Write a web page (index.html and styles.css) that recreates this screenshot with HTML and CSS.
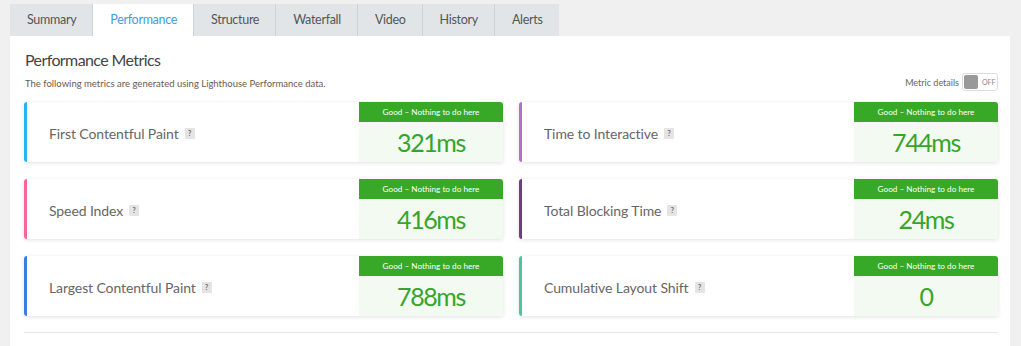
FILE: index.html
```html
<!DOCTYPE html>
<html lang="en">
<head>
    <meta charset="UTF-8">
    <meta name="viewport" content="width=device-width, initial-scale=1.0">
    <title>Performance</title>
    <link rel="stylesheet" href="styles.css">
</head>
<body>
    <div id="tabs">
        <div class="tab">Summary</div>
        <div class="tab active">Performance</div>
        <div class="tab">Structure</div>
        <div class="tab">Waterfall</div>
        <div class="tab">Video</div>
        <div class="tab">History</div>
        <div class="tab">Alerts</div>
    </div>
    <div id="panel">
        <div class="panel-head">
            <div>
                <h2>Performance Metrics</h2>
                <p class="intro">The following metrics are generated using Lighthouse Performance data.</p>
            </div>
            <div class="details-toggle">
                <span>Metric details</span>
                <div class="switch"><span class="knob"></span><span class="switch-label">OFF</span></div>
            </div>
        </div>
        <div id="metrics">
            <div class="metric fcp">
                <div class="metric-name">First Contentful Paint <span class="help">?</span></div>
                <div class="metric-score">
                    <div class="grade">Good – Nothing to do here</div>
                    <div class="value">321ms</div>
                </div>
            </div>
            <div class="metric tti">
                <div class="metric-name">Time to Interactive <span class="help">?</span></div>
                <div class="metric-score">
                    <div class="grade">Good – Nothing to do here</div>
                    <div class="value">744ms</div>
                </div>
            </div>
            <div class="metric si">
                <div class="metric-name">Speed Index <span class="help">?</span></div>
                <div class="metric-score">
                    <div class="grade">Good – Nothing to do here</div>
                    <div class="value">416ms</div>
                </div>
            </div>
            <div class="metric tbt">
                <div class="metric-name">Total Blocking Time <span class="help">?</span></div>
                <div class="metric-score">
                    <div class="grade">Good – Nothing to do here</div>
                    <div class="value">24ms</div>
                </div>
            </div>
            <div class="metric lcp">
                <div class="metric-name">Largest Contentful Paint <span class="help">?</span></div>
                <div class="metric-score">
                    <div class="grade">Good – Nothing to do here</div>
                    <div class="value">788ms</div>
                </div>
            </div>
            <div class="metric cls">
                <div class="metric-name">Cumulative Layout Shift <span class="help">?</span></div>
                <div class="metric-score">
                    <div class="grade">Good – Nothing to do here</div>
                    <div class="value">0</div>
                </div>
            </div>
        </div>
        <hr class="divider">
    </div>
</body>
</html>
```

FILE: styles.css
```css
body {
    font-family: Lato, "Open Sans", sans-serif;
    background: #f0f0f0;
    margin: 0;
    padding: 4px 11px 0 10px;
    color: #555;
}

#tabs {
    display: flex;
}

.tab {
    height: 32px;
    line-height: 32px;
    padding: 0 16px 0 17px;
    font-size: 12.5px;
    letter-spacing: -0.3px;
    color: #555;
    background: #e1e5e8;
    border-right: 1px solid #cdd2d6;
}

.tab.active {
    background: #fff;
    color: #3d9ee2;
}

.tab:last-child {
    border-right: none;
}

#panel {
    background: #fff;
    padding: 14px 12px 0 14px;
    height: 310px;
}

.panel-head {
    display: flex;
    justify-content: space-between;
    align-items: flex-end;
}

.panel-head h2 {
    font-size: 16px;
    letter-spacing: -0.6px;
    font-weight: normal;
    color: #444;
    margin: 0 0 0 1px;
    line-height: 20px;
}

.intro {
    font-size: 9.5px;
    color: #6b5a4e;
    margin: 8px 0 0 1px;
}

.details-toggle {
    display: flex;
    align-items: center;
    gap: 3px;
    font-size: 9px;
    color: #666;
    margin-bottom: -2px;
}

.switch {
    display: flex;
    align-items: center;
    width: 36px;
    height: 18px;
    border: 1px solid #ddd;
    border-radius: 3px;
    box-sizing: border-box;
    padding: 1px;
}

.knob {
    width: 14px;
    height: 14px;
    background: #999;
    border-radius: 2px;
}

.switch-label {
    font-size: 7px;
    color: #888;
    margin-left: 4px;
}

#metrics {
    display: grid;
    grid-template-columns: 1fr 1fr;
    column-gap: 16px;
    row-gap: 17px;
    margin-top: 13px;
}

.metric {
    display: flex;
    height: 60px;
    border-left: 3px solid #24b6f0;
    border-radius: 3px;
    box-shadow: 0 1px 4px rgba(0, 0, 0, 0.12);
    overflow: hidden;
}

.metric.fcp { border-left-color: #23b5f0; }
.metric.tti { border-left-color: #b26fd0; }
.metric.si { border-left-color: #f8649b; }
.metric.tbt { border-left-color: #6b3f78; }
.metric.lcp { border-left-color: #3f7be1; }
.metric.cls { border-left-color: #4fc49a; }

.metric-name {
    flex: 1;
    display: flex;
    align-items: center;
    padding: 3px 0 0 22px;
    font-size: 14px;
    letter-spacing: -0.1px;
    color: #666;
}

.help {
    display: inline-block;
    width: 10px;
    height: 11px;
    line-height: 11px;
    margin-left: 6px;
    background: #e4e4e4;
    border-radius: 1px;
    font-size: 7px;
    font-weight: bold;
    letter-spacing: 0;
    text-align: center;
    color: #666;
}

.metric-score {
    width: 144px;
    display: flex;
    flex-direction: column;
}

.grade {
    height: 20px;
    line-height: 20px;
    background: #37a927;
    color: #fff;
    font-size: 8.2px;
    text-align: center;
}

.value {
    flex: 1;
    background: #f3faf1;
    color: #37a52a;
    font-size: 25px;
    letter-spacing: -1.4px;
    text-align: center;
    line-height: 40px;
}

.divider {
    border: none;
    border-top: 1px solid #e6e6e6;
    margin: 16px 0 0 0;
}
```
